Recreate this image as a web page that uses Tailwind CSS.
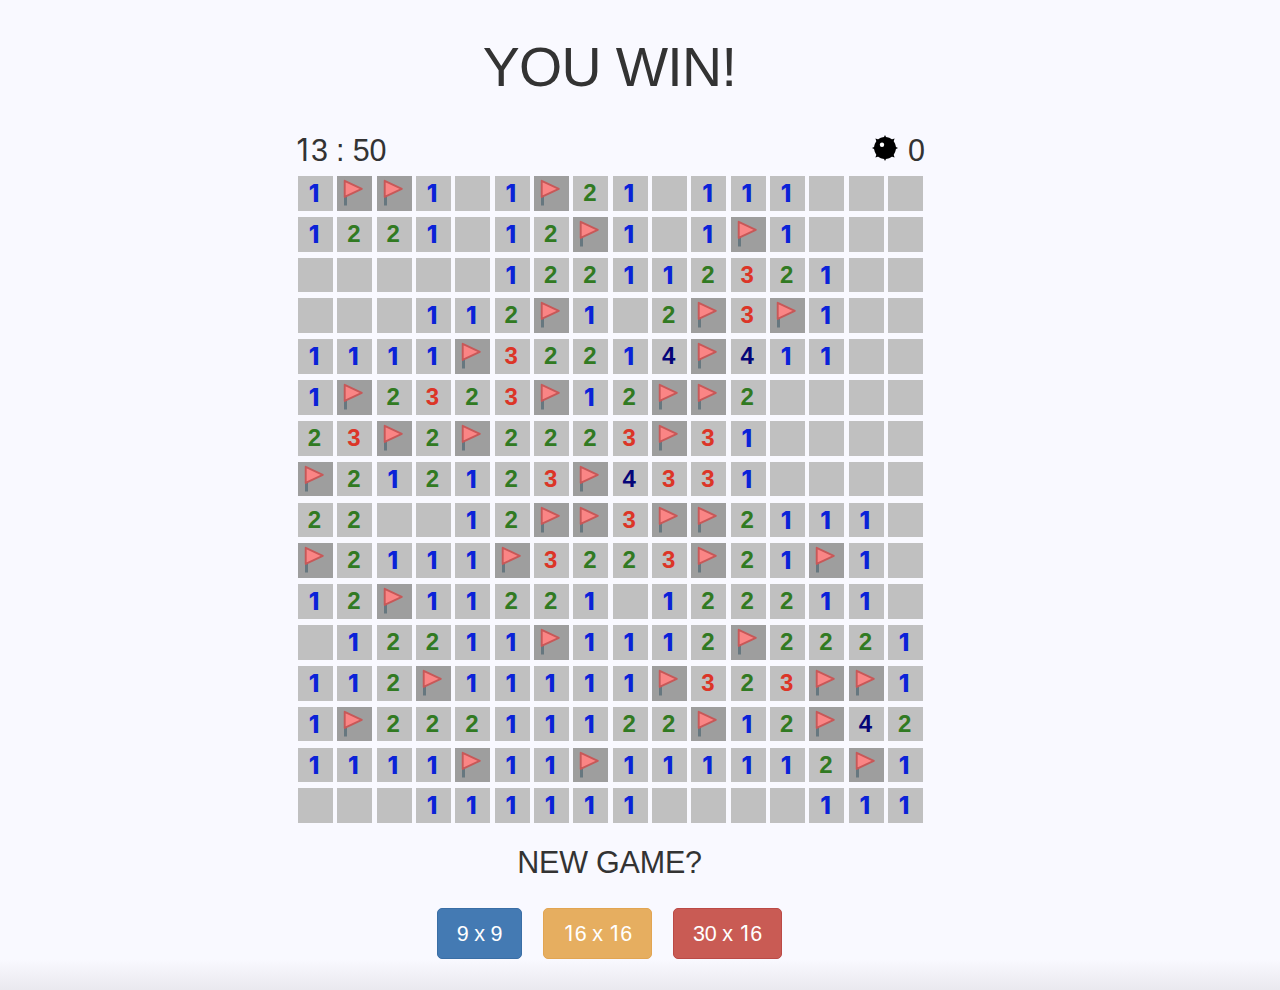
<!DOCTYPE html>
<html lang="en">
<head>
  <meta charset="UTF-8" />
  <meta name="viewport" content="width=device-width, initial-scale=1" />
  <title>Minesweeper</title>
  <script src="https://cdn.jsdelivr.net/npm/@tailwindcss/browser@4"></script>
</head>
<body class="bg-[#f9f9ff] font-['Liberation_Sans',Arial,sans-serif] text-[#333333] h-[990px] overflow-hidden flex flex-col">
  <main class="ml-[298px] w-[625px] flex-grow flex flex-col pt-[35px]">
    <h1 class="text-[55.5px] leading-[64px] tracking-[-0.7px] text-center pr-[2px]">YOU WIN!</h1>

    <div class="flex justify-between items-center mt-[34px] h-[34px] text-[30.5px] leading-[34px] -ml-[4px] -mr-[2px]">
      <div id="timer" class="tracking-[-0.2px]"><span class="inline-block w-[0.56em] text-center font-[Inter]">1</span>3 : 50</div>
      <div class="flex items-center gap-[10px]">
        <svg class="w-[26px] h-[26px] -mt-[4px]" viewBox="0 0 26 26">
          <path d="M13 0l2 4h-4zM13 26l-2-4h4zM0 13l4-2v4zM26 13l-4 2v-4zM3.4 3.4l4.6 1.6-3 3zM22.6 3.4l-1.6 4.6-3-3zM3.4 22.6l1.6-4.6 3 3zM22.6 22.6l-4.6-1.6 3-3z" fill="#000" />
          <circle cx="13" cy="13" r="10.9" fill="#000" />
          <circle cx="10" cy="9.8" r="2.2" fill="#fff" />
        </svg>
        <span id="minesLeft">0</span>
      </div>
    </div>

    <div id="board" class="mt-[9px] grid grid-cols-[repeat(16,35px)] auto-rows-[34.7px] gap-x-[4.35px] gap-y-[6.15px]"></div>

    <h2 class="mt-[22px] text-[30.5px] leading-[34px] tracking-[-0.2px] text-center pr-[2px]">NEW GAME?</h2>

    <div class="mt-[29px] flex justify-center gap-[21px] pr-[2px] text-[21.5px] tracking-[-0.2px] text-white">
      <button class="w-[85px] h-[51px] pt-[2px] rounded-[5px] border border-[#3a6ea5] bg-[#447ab3]">9 x 9</button>
      <button class="w-[109px] h-[51px] rounded-[5px] border border-[#e2a552] bg-[#e6ae60]"><span class="inline-block w-[0.54em] text-center font-[Inter]">1</span>6 x <span class="inline-block w-[0.54em] text-center font-[Inter]">1</span>6</button>
      <button class="w-[109px] h-[51px] rounded-[5px] border border-[#bb4a46] bg-[#c95b54]">30 x <span class="inline-block w-[0.54em] text-center font-[Inter]">1</span>6</button>
    </div>
  </main>
  <div class="h-[40px] w-full shrink-0 bg-linear-to-b from-[#f9f9ff] to-[#e5e4ea]"></div>

  <script>
    // F = flag, . = open empty cell
    const rows = [
      '1FF1.1F21.111...',
      '1221.12F1.1F1...',
      '.....122112321..',
      '...112F1.2F3F1..',
      '1111F32214F411..',
      '1F2323F12FF2....',
      '23F2F2223F31....',
      'F212123F4331....',
      '22..12FF3FF2111.',
      'F2111F3223F21F1.',
      '12F11221.122211.',
      '.12211F1112F2221',
      '112F11111F323FF1',
      '1F22211122F12F42',
      '1111F11F111112F1',
      '...111111....111'
    ];

    const colors = {
      1: 'text-[#0a22d8] font-[Inter] font-extrabold leading-[35.5px] pr-[3px]',
      2: 'text-[#317a22] font-bold leading-[34px] pr-[2px]',
      3: 'text-[#dc3527] font-bold leading-[34px] pr-[2px]',
      4: 'text-[#050578] font-bold leading-[34px] pr-[2px]'
    };

    const flag = `
      <svg class="w-[35px] h-[35px]" viewBox="0 0 35 35">
        <path d="M8.5 17v12.5" stroke="#66777f" stroke-width="3" />
        <path d="M7.7 4.8L24.8 12.8 7.7 20.9z" fill="#fa8585" stroke="#c75858" stroke-width="1.9" stroke-linejoin="round" />
      </svg>`;

    const board = document.getElementById('board');
    rows.forEach((row) => {
      [...row].forEach((value) => {
        const cell = document.createElement('div');
        if (value === 'F') {
          cell.className = 'bg-[#9e9e9e] overflow-hidden';
          cell.innerHTML = flag;
        } else {
          cell.className = 'bg-[#c0c0c0] text-center text-[24px] ' + (colors[value] || '');
          cell.textContent = value === '.' ? '' : value;
        }
        board.appendChild(cell);
      });
    });
  </script>
</body>
</html>
